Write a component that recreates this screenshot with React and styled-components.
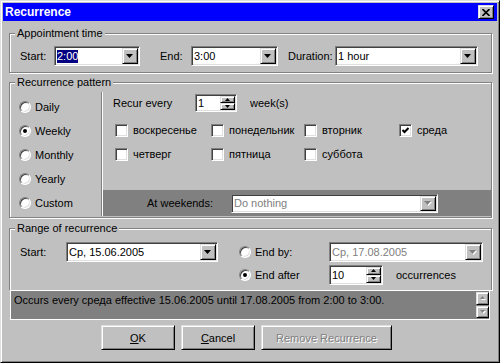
import React from 'react';
import styled, { css, createGlobalStyle } from 'styled-components';

const Global = createGlobalStyle`
  html, body { margin: 0; padding: 0; background: #c0c0c0; }
  body {
    font-family: "Liberation Sans", Arial, sans-serif;
    font-size: 11px;
    color: #000;
  }
  * { box-sizing: border-box; }
`;

const raised = css`
  background: #c0c0c0;
  border: 1px solid;
  border-color: #dfdfdf #000 #000 #dfdfdf;
  box-shadow: inset 1px 1px #fff, inset -1px -1px #808080;
`;

const sunken = css`
  background: #fff;
  border: 1px solid;
  border-color: #808080 #fff #fff #808080;
  box-shadow: inset 1px 1px #404040, inset -1px -1px #dfdfdf;
`;

const Window = styled.div`
  width: 500px;
  height: 363px;
  background: #c0c0c0;
  border: 1px solid;
  border-color: #dfdfdf #000 #000 #dfdfdf;
  box-shadow: inset 1px 1px #fff, inset -1px -1px #808080;
  padding: 2px;
  display: flex;
  flex-direction: column;
`;

const TitleBar = styled.div`
  height: 18px;
  background: #0000ff;
  color: #fff;
  font-weight: bold;
  font-size: 12px;
  display: flex;
  align-items: center;
  justify-content: space-between;
  padding: 0 3px 0 2px;
`;

const CloseButton = styled.div`
  ${raised};
  width: 16px;
  height: 14px;
  display: flex;
  align-items: center;
  justify-content: center;
`;

const Body = styled.div`
  display: flex;
  flex-direction: column;
  padding: 0 5px 0 6px;
`;

const Group = styled.div`
  position: relative;
  margin-top: ${p => p.$top}px;
  border: 1px solid #808080;
  border-bottom: ${p => (p.$open ? 'none' : '1px solid #808080')};
  box-shadow: 1px 1px 0 #fff, inset 1px 1px 0 #fff;
  padding: ${p => p.$pad};
`;

const Caption = styled.span`
  position: absolute;
  top: -7px;
  left: 5px;
  padding: 0 2px;
  line-height: 13px;
  background: #c0c0c0;
`;

const Row = styled.div`
  display: flex;
  align-items: center;
  height: ${p => p.$h || 20}px;
`;

const Label = styled.span`
  width: ${p => p.$w}px;
  margin-left: ${p => p.$ml || 0}px;
  flex-shrink: 0;
  white-space: nowrap;
  color: ${p => (p.$dim ? '#808080' : '#000')};
`;

const Field = styled.div`
  ${sunken};
  width: ${p => p.$w}px;
  height: ${p => p.$h || 20}px;
  padding: 1px;
  display: flex;
  align-items: stretch;
  flex-shrink: 0;
`;

const Value = styled.div`
  flex: 1;
  display: flex;
  align-items: center;
  padding-left: 1px;
  white-space: nowrap;
  overflow: hidden;
  color: ${p => (p.$dim ? '#808080' : '#000')};
`;

const Selected = styled.span`
  background: #000080;
  color: #fff;
  line-height: 13px;
`;

const DropButton = styled.div`
  ${raised};
  width: 16px;
  display: flex;
  align-items: center;
  justify-content: center;
`;

const SpinCol = styled.div`
  width: 15px;
  display: flex;
  flex-direction: column;
`;

const SpinButton = styled.div`
  ${raised};
  flex: 1;
  display: flex;
  align-items: center;
  justify-content: center;
`;

const Arrow = ({ w = 7, h = 4, up, dim }) => (
  <svg width={w + 1} height={h + 1} viewBox={`0 0 ${w + 1} ${h + 1}`}>
    {dim && (
      <polygon
        points={up ? `1,${h + 1} ${w + 1},${h + 1} ${w / 2 + 1},1` : `1,1 ${w + 1},1 ${w / 2 + 1},${h + 1}`}
        fill="#fff"
      />
    )}
    <polygon
      points={up ? `0,${h} ${w},${h} ${w / 2},0` : `0,0 ${w},0 ${w / 2},${h}`}
      fill={dim ? '#808080' : '#000'}
    />
  </svg>
);

const Combo = ({ w, h, dim, children }) => (
  <Field $w={w} $h={h}>
    <Value $dim={dim}>{children}</Value>
    <DropButton>
      <Arrow dim={dim} />
    </DropButton>
  </Field>
);

const Spin = ({ w, h, children }) => (
  <Field $w={w} $h={h}>
    <Value>{children}</Value>
    <SpinCol>
      <SpinButton>
        <Arrow w={5} h={3} up />
      </SpinButton>
      <SpinButton>
        <Arrow w={5} h={3} />
      </SpinButton>
    </SpinCol>
  </Field>
);

const Option = styled.label`
  display: flex;
  align-items: center;
  gap: ${p => p.$gap || 4}px;
  height: ${p => p.$h || 24}px;
  white-space: nowrap;
`;

const RadioDot = styled.span`
  ${sunken};
  width: 12px;
  height: 12px;
  border-radius: 50%;
  display: flex;
  align-items: center;
  justify-content: center;
  flex-shrink: 0;
  &::after {
    content: '';
    width: 4px;
    height: 4px;
    border-radius: 50%;
    background: ${p => (p.$on ? '#000' : 'transparent')};
  }
`;

const CheckBox = styled.span`
  ${sunken};
  width: 13px;
  height: 13px;
  display: flex;
  align-items: center;
  justify-content: center;
  flex-shrink: 0;
`;

const Radio = ({ on, children, gap, h }) => (
  <Option $gap={gap} $h={h}>
    <RadioDot $on={on} />
    {children}
  </Option>
);

const Check = ({ on, children }) => (
  <Option $gap={5} $h={24}>
    <CheckBox>
      {on && (
        <svg width="7" height="7" viewBox="0 0 7 7">
          <polyline points="0.5,3 2.5,5 6.5,1" fill="none" stroke="#000" strokeWidth="2" />
        </svg>
      )}
    </CheckBox>
    {children}
  </Option>
);

const Pattern = styled.div`
  display: flex;
  height: 124px;
`;

const Kinds = styled.div`
  width: 91px;
  padding: 3px 0 0 9px;
  display: flex;
  flex-direction: column;
`;

const Divider = styled.div`
  width: 2px;
  border-left: 1px solid #808080;
  border-right: 1px solid #fff;
`;

const Details = styled.div`
  flex: 1;
  display: flex;
  flex-direction: column;
`;

const DetailsInner = styled.div`
  padding: 2px 0 0 10px;
`;

const Days = styled.div`
  display: grid;
  grid-template-columns: 96px 93px 95px auto;
  grid-auto-rows: 24px;
  margin: 6px 0 0 2px;
`;

const Band = styled.div`
  margin-top: auto;
  height: 26px;
  background: #808080;
  display: flex;
  align-items: center;
  padding-left: 44px;
`;

const RangeGrid = styled.div`
  display: grid;
  grid-template-columns: 46px 173px 90px 1fr;
  grid-template-rows: 20px 20px;
  row-gap: 3px;
  align-items: center;
`;

const Summary = styled.div`
  margin-left: 1px;
  width: 480px;
  height: 30px;
  background: #808080;
  border: 1px solid #fff;
  display: flex;
`;

const SummaryText = styled.div`
  flex: 1;
  padding: 3px 0 0 3px;
  white-space: nowrap;
`;

const ScrollCol = styled.div`
  display: flex;
  flex-direction: column;
  gap: 1px;
  padding: 1px 0 1px;
`;

const ScrollButton = styled.div`
  ${raised};
  width: 13px;
  height: 13px;
  display: flex;
  align-items: center;
  justify-content: center;
`;

const Buttons = styled.div`
  display: flex;
  gap: 6px;
  margin-top: 5px;
  padding-left: 92px;
`;

const PushButton = styled.div`
  ${raised};
  width: ${p => p.$w}px;
  height: 25px;
  display: flex;
  align-items: center;
  justify-content: center;
  color: ${p => (p.$disabled ? '#808080' : '#000')};
  text-shadow: ${p => (p.$disabled ? '1px 1px 0 #fff' : 'none')};
`;

const U = styled.span`
  text-decoration: underline;
`;

const days = [
  ['воскресенье', false],
  ['понедельник', false],
  ['вторник', false],
  ['среда', true],
  ['четверг', false],
  ['пятница', false],
  ['суббота', false],
];

const kinds = [
  ['Daily', false],
  ['Weekly', true],
  ['Monthly', false],
  ['Yearly', false],
  ['Custom', false],
];

export default function App() {
  return (
    <>
      <Global />
      <Window>
        <TitleBar>
          <span>Recurrence</span>
          <CloseButton>
            <svg width="8" height="7" viewBox="0 0 8 7">
              <path d="M0.5 0 L7.5 7 M7.5 0 L0.5 7" stroke="#000" strokeWidth="1.6" />
            </svg>
          </CloseButton>
        </TitleBar>
        <Body>
          <Group $top={12} $pad="12px 0 6px 10px">
            <Caption>Appointment time</Caption>
            <Row>
              <Label $w={34}>Start:</Label>
              <Combo w={86}>
                <Selected>2:00</Selected>
              </Combo>
              <Label $w={31} $ml={20}>End:</Label>
              <Combo w={87}>3:00</Combo>
              <Label $w={47} $ml={10}>Duration:</Label>
              <Combo w={143}>1 hour</Combo>
            </Row>
          </Group>

          <Group $top={9} $pad="9px 0 1px 0">
            <Caption>Recurrence pattern</Caption>
            <Pattern>
              <Kinds>
                {kinds.map(([name, on]) => (
                  <Radio key={name} on={on}>
                    {name}
                  </Radio>
                ))}
              </Kinds>
              <Divider />
              <Details>
                <DetailsInner>
                  <Row $h={18}>
                    <Label $w={82}>Recur every</Label>
                    <Spin w={42} h={18}>1</Spin>
                    <Label $ml={13}>week(s)</Label>
                  </Row>
                  <Days>
                    {days.map(([name, on]) => (
                      <Check key={name} on={on}>
                        {name}
                      </Check>
                    ))}
                  </Days>
                </DetailsInner>
                <Band>
                  <Label $w={84}>At weekends:</Label>
                  <Combo w={207} h={19} dim>
                    Do nothing
                  </Combo>
                </Band>
              </Details>
            </Pattern>
          </Group>

          <Group $top={10} $pad="13px 0 5px 10px" $open>
            <Caption>Range of recurrence</Caption>
            <RangeGrid>
              <Label>Start:</Label>
              <Combo w={152}>Ср, 15.06.2005</Combo>
              <Radio h={20}>End by:</Radio>
              <Combo w={154} dim>
                Ср, 17.08.2005
              </Combo>
              <span />
              <span />
              <Radio h={20} on>
                End after
              </Radio>
              <Row>
                <Spin w={54}>10</Spin>
                <Label $ml={13}>occurrences</Label>
              </Row>
            </RangeGrid>
          </Group>
          <Summary>
            <SummaryText>
              Occurs every среда effective 15.06.2005 until 17.08.2005 from 2:00 to 3:00.
            </SummaryText>
            <ScrollCol>
              <ScrollButton>
                <Arrow w={5} h={3} up dim />
              </ScrollButton>
              <ScrollButton>
                <Arrow w={5} h={3} dim />
              </ScrollButton>
            </ScrollCol>
          </Summary>

          <Buttons>
            <PushButton $w={74}>
              <span>
                <U>O</U>K
              </span>
            </PushButton>
            <PushButton $w={74}>
              <span>
                <U>C</U>ancel
              </span>
            </PushButton>
            <PushButton $w={131} $disabled>
              Remove Recurrence
            </PushButton>
          </Buttons>
        </Body>
      </Window>
    </>
  );
}
